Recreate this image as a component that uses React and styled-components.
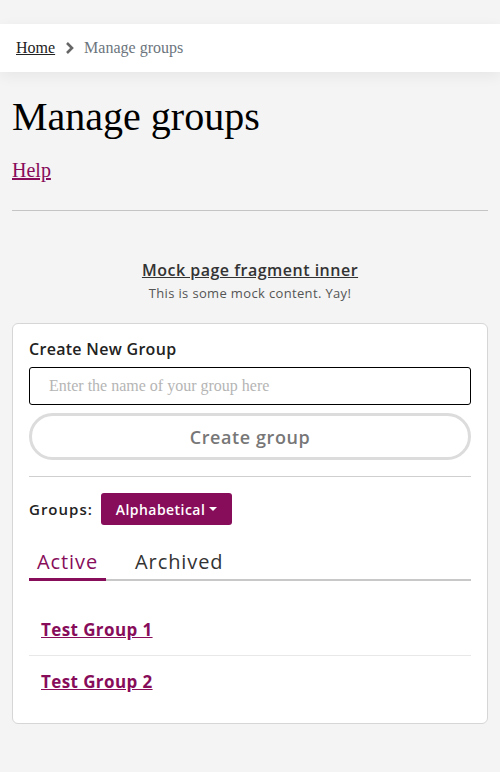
import React, { useState } from 'react';
import styled, { createGlobalStyle } from 'styled-components';

const purple = '#870c5a';
const sans = '"Open Sans", "Liberation Sans", sans-serif';

const GlobalStyle = createGlobalStyle`
  html, body {
    margin: 0;
    background: #f4f4f4;
    font-family: "Liberation Serif", serif;
  }
`;

const Page = styled.div`
  padding-top: 24px;
  min-height: 748px;
`;

const Header = styled.div`
  background: #fff;
  height: 48px;
  display: flex;
  align-items: center;
  padding: 0 16px;
  box-shadow: 0 4px 14px rgba(0, 0, 0, 0.06);
`;

const Crumb = styled.a`
  font-size: 16px;
  color: ${(p) => (p.$current ? '#6c757d' : '#222')};
  text-decoration: ${(p) => (p.$current ? 'none' : 'underline')};
`;

const Chevron = styled.svg`
  margin: 0 9px 0 10px;
`;

const Main = styled.div`
  padding: 0 12px;
`;

const Title = styled.h1`
  font-size: 40px;
  font-weight: normal;
  margin: 23px 0 20px;
  line-height: 44px;
  color: #000;
`;

const HelpLink = styled.a`
  font-size: 20px;
  color: ${purple};
  text-decoration: underline;
`;

const Rule = styled.hr`
  border: 0;
  border-top: 1px solid ${(p) => p.$color || '#c4c4c4'};
  margin: ${(p) => p.$margin || '0'};
`;

const Fragment = styled.div`
  text-align: center;
  margin: 48px 0 21px;
  font-family: ${sans};
`;

const FragmentTitle = styled.a`
  display: block;
  font-size: 16px;
  font-weight: 600;
  letter-spacing: 0.5px;
  color: #333;
  text-decoration: underline;
  line-height: 22px;
`;

const FragmentText = styled.p`
  margin: 3px 0 0;
  font-size: 13px;
  letter-spacing: 0.35px;
  color: #555;
`;

const Card = styled.div`
  background: #fff;
  border: 1px solid #d6d6d6;
  border-radius: 6px;
  padding: 13px 16px 16px;
  font-family: ${sans};
`;

const Label = styled.div`
  font-size: 16px;
  font-weight: 600;
  letter-spacing: 0.3px;
  color: #222;
  line-height: 24px;
  margin-bottom: 6px;
`;

const Input = styled.input`
  box-sizing: border-box;
  width: 100%;
  height: 38px;
  border: 1px solid #000;
  border-radius: 3px;
  padding: 0 19px;
  font-family: "Liberation Serif", serif;
  font-size: 16px;
  &::placeholder {
    color: #b5b5b5;
  }
`;

const CreateButton = styled.button`
  box-sizing: border-box;
  width: 100%;
  height: 47px;
  margin-top: 8px;
  border: 3px solid #dcdcdc;
  border-radius: 24px;
  background: #fff;
  color: #777;
  font-family: ${sans};
  font-size: 18px;
  font-weight: 600;
  letter-spacing: 0.6px;
`;

const SortRow = styled.div`
  display: flex;
  align-items: center;
  gap: 8px;
  margin-top: 16px;
`;

const SortLabel = styled.span`
  font-size: 15px;
  font-weight: 600;
  letter-spacing: 1px;
  color: #222;
`;

const SortButton = styled.button`
  display: flex;
  align-items: center;
  gap: 4px;
  height: 32px;
  padding: 0 15px;
  border: 0;
  border-radius: 3px;
  background: ${purple};
  color: #fff;
  font-family: ${sans};
  font-size: 14px;
  font-weight: 600;
  letter-spacing: 0.45px;
`;

const Caret = styled.span`
  width: 0;
  height: 0;
  border-left: 4px solid transparent;
  border-right: 4px solid transparent;
  border-top: 4px solid #fff;
`;

const Tabs = styled.div`
  display: flex;
  margin-top: 23px;
  border-bottom: 2px solid #c8c8c8;
`;

const Tab = styled.button`
  background: none;
  border: 0;
  padding: 0 8px 3px;
  margin-right: 21px;
  margin-bottom: -2px;
  font-family: ${sans};
  font-size: 20px;
  letter-spacing: 0.9px;
  color: ${(p) => (p.$active ? purple : '#333')};
  border-bottom: 3px solid ${(p) => (p.$active ? purple : 'transparent')};
  cursor: pointer;
`;

const List = styled.ul`
  list-style: none;
  margin: 23px 0 0;
  padding: 0;
`;

const Item = styled.li`
  padding: 14px 12px;
  & + & {
    border-top: 1px solid #e8e8e8;
  }
`;

const GroupLink = styled.a`
  font-size: 17px;
  font-weight: 700;
  letter-spacing: 0.4px;
  color: ${purple};
  text-decoration: underline;
`;

export default function App() {
  const [tab, setTab] = useState('active');
  const groups = ['Test Group 1', 'Test Group 2'];

  return (
    <Page>
      <GlobalStyle />
      <Header>
        <Crumb href="#">Home</Crumb>
        <Chevron width="10" height="14" viewBox="0 0 10 14">
          <path d="M2 2l5 5-5 5" fill="none" stroke="#666" strokeWidth="2.6" />
        </Chevron>
        <Crumb $current>Manage groups</Crumb>
      </Header>
      <Main>
        <Title>Manage groups</Title>
        <HelpLink href="#">Help</HelpLink>
        <Rule $margin="28px 0 0" />
        <Fragment>
          <FragmentTitle href="#">Mock page fragment inner</FragmentTitle>
          <FragmentText>This is some mock content. Yay!</FragmentText>
        </Fragment>
        <Card>
          <Label>Create New Group</Label>
          <Input placeholder="Enter the name of your group here" />
          <CreateButton>Create group</CreateButton>
          <Rule $margin="16px 0 0" $color="#cfcfcf" />
          <SortRow>
            <SortLabel>Groups:</SortLabel>
            <SortButton>
              Alphabetical <Caret />
            </SortButton>
          </SortRow>
          <Tabs>
            <Tab $active={tab === 'active'} onClick={() => setTab('active')}>Active</Tab>
            <Tab $active={tab === 'archived'} onClick={() => setTab('archived')}>Archived</Tab>
          </Tabs>
          <List>
            {groups.map((g) => (
              <Item key={g}>
                <GroupLink href="#">{g}</GroupLink>
              </Item>
            ))}
          </List>
        </Card>
      </Main>
    </Page>
  );
}
